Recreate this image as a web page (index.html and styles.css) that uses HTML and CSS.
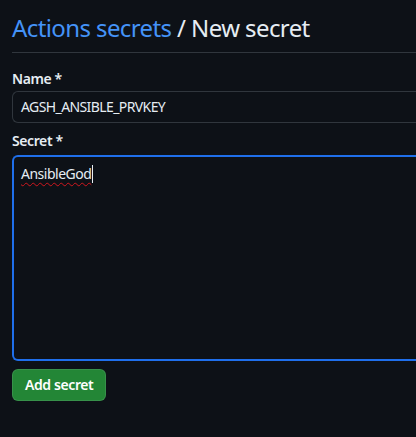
FILE: index.html
```html
<!DOCTYPE html>
<html>
<head>
<meta charset="utf-8">
<link rel="stylesheet" href="styles.css">
</head>
<body>
<div class="page">
  <h1 class="title"><a class="crumb">Actions secrets</a> / New secret</h1>
  <form class="form">
    <label class="label">Name *</label>
    <div class="input">AGSH_ANSIBLE_PRVKEY</div>
    <label class="label label-secret">Secret *</label>
    <div class="textarea"><span class="typo">AnsibleGod</span><span class="caret"></span></div>
    <button type="button" class="btn">Add secret</button>
  </form>
</div>
</body>
</html>
```
FILE: styles.css
```css
html, body {
  margin: 0;
  padding: 0;
  background: #0d1117;
  overflow: hidden;
}
body {
  font-family: "Noto Sans", "Open Sans", sans-serif;
  color: #e6edf3;
}
.page {
  width: 404px;
  padding: 12px 0 0 12px;
}
.title {
  margin: 0;
  font-weight: 400;
  font-size: 24px;
  letter-spacing: -0.6px;
  line-height: 32px;
  padding-bottom: 8px;
  border-bottom: 1px solid #30363d;
  color: #e6edf3;
}
.crumb {
  color: #4493f8;
}
.form {
  display: flex;
  flex-direction: column;
  align-items: flex-start;
  padding-top: 16px;
}
.label {
  font-weight: 600;
  font-size: 14px;
  letter-spacing: -0.4px;
  line-height: 20px;
  margin-bottom: 2px;
}
.label-secret {
  margin-top: 8px;
}
.input {
  box-sizing: border-box;
  width: calc(100% + 8px);
  height: 32px;
  border: 1px solid #30363d;
  border-radius: 6px 0 0 6px;
  border-right: none;
  padding: 0 8px;
  font-size: 14px;
  letter-spacing: -0.6px;
  line-height: 30px;
}
.textarea {
  box-sizing: border-box;
  width: calc(100% + 8px);
  height: 206px;
  border: 2px solid #1f6feb;
  border-right: none;
  border-radius: 6px 0 0 6px;
  padding: 7px 7px;
  font-size: 14px;
  letter-spacing: -0.5px;
  line-height: 20px;
  margin-top: 2px;
}
.typo {
  text-decoration: underline wavy #d0161e;
  text-decoration-thickness: 1px;
  text-underline-offset: 3px;
}
.caret {
  display: inline-block;
  width: 1px;
  height: 18px;
  margin-left: 1px;
  background: #e6edf3;
  vertical-align: -4px;
}
.btn {
  margin-top: 8px;
  height: 32px;
  padding: 0 12px;
  border: 1px solid rgba(240,246,252,0.1);
  border-radius: 6px;
  background: #238636;
  color: #ffffff;
  font-family: inherit;
  font-weight: 600;
  font-size: 14px;
  letter-spacing: -0.4px;
  line-height: 20px;
}
```
